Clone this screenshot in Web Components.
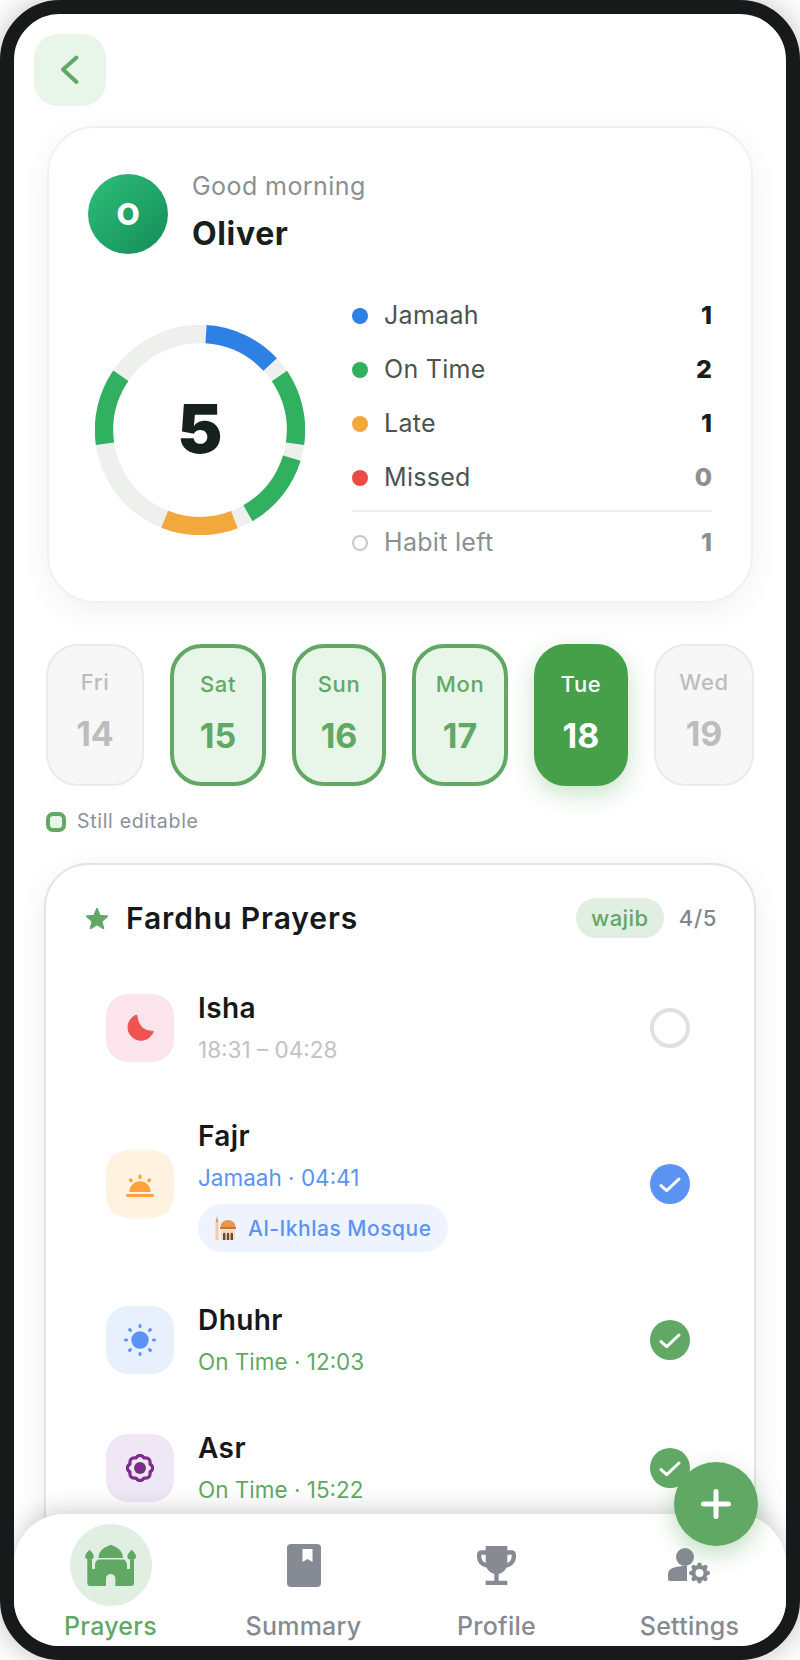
<!DOCTYPE html>
<html lang="en">
<head>
<meta charset="utf-8">
<title>Prayers</title>
<style>
  html, body { margin: 0; background: #fff; }
  body { font-family: Inter, "Liberation Sans", sans-serif; }
</style>
</head>
<body>
<phone-frame>
  <back-button></back-button>
  <summary-card name="Oliver" greeting="Good morning" initial="O" total="5">
    <legend-row color="#2f80e4" label="Jamaah" value="1"></legend-row>
    <legend-row color="#31b05f" label="On Time" value="2"></legend-row>
    <legend-row color="#f2a83b" label="Late" value="1"></legend-row>
    <legend-row color="#ea4b43" label="Missed" value="0" muted></legend-row>
    <legend-row label="Habit left" value="1" muted hollow></legend-row>
  </summary-card>
  <day-strip>
    <day-pill state="off" w="98" day="Fri" date="14"></day-pill>
    <day-pill state="edit" w="96" day="Sat" date="15"></day-pill>
    <day-pill state="edit" w="94" day="Sun" date="16"></day-pill>
    <day-pill state="edit" w="96" day="Mon" date="17"></day-pill>
    <day-pill state="today" w="94" day="Tue" date="18"></day-pill>
    <day-pill state="off" w="100" day="Wed" date="19"></day-pill>
  </day-strip>
  <prayer-card title="Fardhu Prayers" tag="wajib" count="4/5">
    <prayer-row name="Isha" sub="18:31 – 04:28" tone="none" bg="#fce4ec">
      <svg slot="icon" width="28" height="29" viewBox="0 0 28 29" fill="#ef5350"><path d="M10.700 1A13 13 0 1 0 27.300 17.500Q12.400 17.400 10.700 1z" stroke="#ef5350" stroke-width="1" stroke-linejoin="round"/></svg>
    </prayer-row>
    <prayer-row name="Fajr" sub="Jamaah · 04:41" tone="blue" bg="#fff2e0">
      <svg slot="icon" width="28" height="28" viewBox="0 0 28 28" fill="#ffa13d" stroke="#ffa13d"><path stroke="none" d="M3.300 22a10.700 10.700 0 0 1 21.400 0z"/><path stroke="none" d="M0 25.500a1.500 1.500 0 0 1 1.500-1.500h25a1.500 1.500 0 0 1 0 3h-25a1.500 1.500 0 0 1-1.500-1.500z"/><path fill="none" stroke-width="3.200" stroke-linecap="round" d="M14 6v1.500M4.500 10l.8.700M23.500 10l-.8.700"/></svg>
      <place-chip>
        <svg slot="icon" width="22" height="24" viewBox="0 0 22 24"><rect x="1.500" y="6" width="3" height="18" fill="#f4c9a4"/><path d="M3 0l1.500 6h-3z" fill="#e09a68"/><path d="M14 4c4.500 0 7.500 3 7.500 7h-15c0-4 3-7 7.500-7z" fill="#e8954f"/><rect x="6" y="11" width="16" height="2" fill="#c4793f"/><rect x="7" y="13" width="14" height="11" fill="#f6dcc0"/><path d="M9 24v-6a1.200 1.200 0 0 1 2.400 0v6zM12.800 24v-6a1.200 1.200 0 0 1 2.400 0v6zM16.600 24v-6a1.200 1.200 0 0 1 2.400 0v6z" fill="#6b4a35"/></svg>
        Al-Ikhlas Mosque
      </place-chip>
    </prayer-row>
    <prayer-row name="Dhuhr" sub="On Time · 12:03" tone="green" bg="#e8f0fd">
      <svg slot="icon" width="32" height="32" viewBox="-16 -16 32 32"><circle r="8.700" fill="#5b93f5"/><path fill="none" stroke="#5b93f5" stroke-width="3" stroke-linecap="round" d="M0-13.500v-1M0 13.500v1M-13.500 0h-1M13.500 0h1M-9.500-9.500l-.9-.9M9.500-9.500l.9-.9M-9.500 9.500l-.9.9M9.500 9.500l.9.9"/></svg>
    </prayer-row>
    <prayer-row name="Asr" sub="On Time · 15:22" tone="green" bg="#efe7f5">
      <svg slot="icon" width="28" height="28" viewBox="0 0 28 28"><path fill="none" stroke="#7b2d8b" stroke-width="3.200" stroke-linejoin="round" d="M9.870 4.020Q14-1.400 18.130 4.020Q24.900 3.100 23.980 9.870Q29.400 14 23.980 18.130Q24.900 24.900 18.130 23.980Q14 29.400 9.870 23.980Q3.100 24.900 4.020 18.130Q-1.400 14 4.020 9.870Q3.100 3.100 9.870 4.020Z"/><circle cx="14" cy="14" r="6" fill="#7b2d8b"/></svg>
    </prayer-row>
  </prayer-card>
  <bottom-nav slot="nav">
    <nav-item label="Prayers" active>
      <svg width="52" height="43" viewBox="0 0 52 43" fill="#62a865"><path d="M25.700.7C20 3 13.500 6 13.500 14H38C38 6 31.500 3 25.700.7z"/><path d="M4.500 5.500C3 8 .2 9.500.2 12.500.2 14.500 2 16 4.500 16S8.800 14.500 8.800 12.500C8.800 9.500 6 8 4.500 5.500zM46.700 5.500C45.200 8 42.400 9.500 42.400 12.500 42.400 14.500 44.200 16 46.700 16S51 14.500 51 12.500C51 9.500 48.200 8 46.700 5.500z"/><path d="M2.300 16H7V25H10V21C10 18 12 15.500 14 15.500H38C40 15.500 42 18 42 21V25H45V16H49V39A3 3 0 0 1 46 42H30.400V34.600A4.650 4.650 0 0 0 21 34.600V42H5.300A3 3 0 0 1 2.300 39z"/></svg>
    </nav-item>
    <nav-item label="Summary">
      <svg width="34" height="43" viewBox="0 0 34 43"><rect width="34" height="43" rx="4" fill="#868a93"/><path d="M15.500 5h10v13l-5-3-5 3z" fill="#fff"/></svg>
    </nav-item>
    <nav-item label="Profile">
      <svg width="39" height="39" viewBox="3 3 18 18" fill="#868a93"><path d="M19 5h-2V3H7v2H5c-1.100 0-2 .9-2 2v1c0 2.550 1.920 4.630 4.390 4.940.63 1.500 1.980 2.630 3.610 2.960V19H7v2h10v-2h-4v-3.100c1.630-.33 2.980-1.460 3.610-2.960C19.080 12.630 21 10.550 21 8V7c0-1.100-.9-2-2-2zM5 8V7h2v3.820C5.840 10.400 5 9.300 5 8zm14 0c0 1.300-.84 2.400-2 2.820V7h2v1z"/></svg>
    </nav-item>
    <nav-item label="Settings">
      <svg width="44" height="38" viewBox="0 0 44 38" style="margin-top:4px"><circle cx="17" cy="9" r="9" fill="#868a93"/><path d="M0 31V26C0 20 8 18 19 18V33H2A2 2 0 0 1 0 31z" fill="#868a93"/><path d="M31.500 16.800v16.400M23.300 25h16.400M25.700 19.200l11.600 11.600M37.300 19.200L25.700 30.800" stroke="#868a93" stroke-width="4.500" stroke-linecap="round"/><circle cx="31.500" cy="25" r="8" fill="#868a93"/><circle cx="31.500" cy="25" r="4" fill="#fff"/></svg>
    </nav-item>
  </bottom-nav>
  <add-button slot="fab"></add-button>
</phone-frame>

<script>
class PhoneFrame extends HTMLElement {
    constructor() {
        super();
        this.attachShadow({mode: "open"}).innerHTML = `
        <style>
            :host {
                display: flex;
                flex-direction: column;
                position: relative;
                box-sizing: border-box;
                width: 800px;
                height: 1660px;
                border: 14px solid #17191b;
                border-radius: 60px;
                background: #fff;
                overflow: hidden;
                box-shadow: 0 0 30px rgba(0, 0, 0, 0.25);
            }
            .content {
                flex: 1;
                min-height: 0;
                overflow: hidden;
                padding: 20px 0 0 0;
            }
            .fab {
                position: absolute;
                right: 28px;
                bottom: 100px;
                z-index: 2;
            }
        </style>
        <div class="content"><slot></slot></div>
        <slot name="nav"></slot>
        <div class="fab"><slot name="fab"></slot></div>
        `;
    }
}

class BackButton extends HTMLElement {
    constructor() {
        super();
        this.attachShadow({mode: "open"}).innerHTML = `
        <style>
            :host {
                display: flex;
                align-items: center;
                justify-content: center;
                width: 72px;
                height: 72px;
                margin-left: 20px;
                border-radius: 24px;
                background: #e8f5e9;
            }
        </style>
        <svg width="72" height="72" viewBox="0 0 72 72" fill="none" stroke="#62a865" stroke-width="4" stroke-linecap="round" stroke-linejoin="round"><path d="M42.500 23.500 L29 35.500 L42.500 48"/></svg>
        `;
    }
}

class SummaryCard extends HTMLElement {
    constructor() {
        super();
        this.attachShadow({mode: "open"});
    }

    connectedCallback() {
        const seg = (from, to, color) => {
            const c = 2 * Math.PI * 96;
            const len = (to - from) / 360 * c;
            return `<circle cx="105" cy="105" r="96" fill="none" stroke="${color}" stroke-width="18.400" stroke-dasharray="${len} ${c - len}" transform="rotate(${from - 90} 105 105)"/>`;
        };
        this.shadowRoot.innerHTML = `
        <style>
            :host {
                display: block;
                box-sizing: border-box;
                height: 477px;
                margin: 20px 33px 0 33px;
                padding: 46px 39px 0 39px;
                border: 2px solid #f0f0f0;
                border-radius: 48px;
                background: #fff;
                box-shadow: 0 8px 32px rgba(0, 0, 0, 0.06);
            }
            .head { display: flex; align-items: center; gap: 24px; }
            .avatar {
                display: flex;
                align-items: center;
                justify-content: center;
                width: 80px;
                height: 80px;
                border-radius: 50%;
                background: linear-gradient(135deg, #2fbf7a, #128c58);
                color: #fff;
                font-size: 30px;
                font-weight: 800;
            }
            .greet { font-size: 25px; line-height: 36px; color: #8a918e; letter-spacing: 0.017em; margin-top: -7px; }
            .name { font-size: 32px; line-height: 44px; font-weight: 700; color: #17211c; letter-spacing: 0.02em; margin: 8px 0 -2px; }
            .body { display: flex; align-items: center; gap: 47px; margin: 35px 0 0 7px; }
            .donut { position: relative; width: 210px; height: 210px; flex: none; }
            .donut svg { display: block; }
            .total {
                position: absolute;
                inset: 0;
                display: flex;
                align-items: center;
                justify-content: center;
                padding-bottom: 3px;
                font-size: 68px;
                font-weight: 900;
                color: #17211c;
            }
            .legend { flex: 1; }
            ::slotted(legend-row:nth-child(5)) {
                margin-top: 5px;
                padding-top: 4px;
                height: 60px;
                border-top: 2px solid #eeeeee;
            }
        </style>
        <div class="head">
            <div class="avatar">${this.getAttribute("initial")}</div>
            <div>
                <div class="greet">${this.getAttribute("greeting")}</div>
                <div class="name">${this.getAttribute("name")}</div>
            </div>
        </div>
        <div class="body">
            <div class="donut">
                <svg width="210" height="210" viewBox="0 0 210 210">
                    <circle cx="105" cy="105" r="96" fill="none" stroke="#eef0ee" stroke-width="18.400"/>
                    ${seg(3.6, 46.9, "#2f80e4")}
                    ${seg(55.8, 98.2, "#31b05f")}
                    ${seg(107, 150, "#31b05f")}
                    ${seg(159, 201.5, "#f2a83b")}
                    ${seg(261.8, 304.4, "#31b05f")}
                </svg>
                <div class="total">${this.getAttribute("total")}</div>
            </div>
            <div class="legend"><slot></slot></div>
        </div>
        `;
    }
}

class LegendRow extends HTMLElement {
    constructor() {
        super();
        this.attachShadow({mode: "open"});
    }

    connectedCallback() {
        const muted = this.hasAttribute("muted");
        const hollow = this.hasAttribute("hollow");
        const dot = hollow ? "background: #fff; border: 2px solid #c4c8c6;" : `background: ${this.getAttribute("color")};`;
        this.shadowRoot.innerHTML = `
        <style>
            :host {
                display: flex;
                align-items: center;
                box-sizing: border-box;
                height: 54px;
                font-size: 25px;
            }
            .dot { box-sizing: border-box; width: 16px; height: 16px; border-radius: 50%; margin-right: 16px; ${dot} }
            .label { flex: 1; padding-bottom: 2px; letter-spacing: 0.012em; color: ${hollow ? "#8a918e" : "#4a5550"}; }
            .value { font-weight: 800; padding-bottom: 2px; color: ${muted ? "#8a918e" : "#17211c"}; }
        </style>
        <span class="dot"></span>
        <span class="label">${this.getAttribute("label")}</span>
        <span class="value">${this.getAttribute("value")}</span>
        `;
    }
}

class DayStrip extends HTMLElement {
    constructor() {
        super();
        this.attachShadow({mode: "open"}).innerHTML = `
        <style>
            :host { display: block; margin: 41px 32px 0 32px; }
            .days { display: flex; gap: 26px; }
            .note { display: flex; align-items: center; gap: 11px; height: 20px; margin-top: 26px; font-size: 19.5px; line-height: 20px; color: #8a8f9a; letter-spacing: 0.035em; }
            .note span:last-child { padding-bottom: 2px; }
            .mark { box-sizing: border-box; width: 20px; height: 20px; border: 4px solid #62a865; border-radius: 7px; background: #e8f5e9; }
        </style>
        <div class="days"><slot></slot></div>
        <div class="note"><span class="mark"></span><span>Still editable</span></div>
        `;
    }
}

class DayPill extends HTMLElement {
    constructor() {
        super();
        this.attachShadow({mode: "open"});
    }

    connectedCallback() {
        const looks = {
            off: "background: #f7f7f7; border: 2px solid #eaeaea; color: #bdbdbd;",
            edit: "background: #e8f5e9; border: 4px solid #62a865; color: #62a865;",
            today: "background: #45a049; border: 4px solid #45a049; color: #fff; box-shadow: 0 8px 24px rgba(69, 160, 73, 0.3);"
        };
        this.shadowRoot.innerHTML = `
        <style>
            :host {
                display: flex;
                flex-direction: column;
                align-items: center;
                box-sizing: border-box;
                flex: none;
                width: ${this.getAttribute("w")}px;
                height: 142px;
                padding-top: 20px;
                border-radius: 32px;
                ${looks[this.getAttribute("state")]}
            }
            .day { font-size: 22px; line-height: 32px; font-weight: 500; letter-spacing: 0.03em; }
            .date { font-size: 34px; line-height: 44px; font-weight: 700; margin-top: 14px; }
        </style>
        <span class="day">${this.getAttribute("day")}</span>
        <span class="date">${this.getAttribute("date")}</span>
        `;
    }
}

class PrayerCard extends HTMLElement {
    constructor() {
        super();
        this.attachShadow({mode: "open"});
    }

    connectedCallback() {
        this.shadowRoot.innerHTML = `
        <style>
            :host {
                display: block;
                box-sizing: border-box;
                margin: 31px 30px 0 30px;
                padding: 33px 37px 48px 40px;
                border: 2px solid #e3e3e3;
                border-radius: 44px;
                background: #fff;
                box-shadow: 0 8px 32px rgba(0, 0, 0, 0.07);
            }
            .head { display: flex; align-items: center; height: 40px; margin-bottom: 50px; }
            .star { display: block; margin-right: 18px; }
            .title { flex: 1; font-size: 30px; font-weight: 600; color: #15191c; letter-spacing: 0.03em; }
            .tag {
                display: flex;
                align-items: center;
                justify-content: center;
                width: 88px;
                height: 40px;
                border-radius: 20px;
                background: #e1efe2;
                color: #62a865;
                font-size: 22px;
                font-weight: 500;
                letter-spacing: 0.02em;
            }
            .count { margin-left: 15px; font-size: 22px; font-weight: 500; color: #80858f; letter-spacing: 0.03em; }
            .rows { display: flex; flex-direction: column; gap: 48px; padding: 0 27px 0 20px; }
        </style>
        <div class="head">
            <svg class="star" width="22" height="21" viewBox="2 2 20 19" fill="#62a865" stroke="#62a865" stroke-width="1" stroke-linejoin="round"><path d="M12 17.270L18.180 21l-1.640-7.030L22 9.240l-7.190-.61L12 2 9.190 8.630 2 9.240l5.460 4.730L5.820 21z"/></svg>
            <span class="title">${this.getAttribute("title")}</span>
            <span class="tag">${this.getAttribute("tag")}</span>
            <span class="count">${this.getAttribute("count")}</span>
        </div>
        <div class="rows"><slot></slot></div>
        `;
    }
}

class PrayerRow extends HTMLElement {
    constructor() {
        super();
        this.attachShadow({mode: "open"});
    }

    connectedCallback() {
        const tones = {none: "#c2c2c2", blue: "#5b93f5", green: "#62a865"};
        const tone = this.getAttribute("tone");
        const mark = tone === "none"
            ? `<span class="check empty"></span>`
            : `<span class="check" style="background:${tones[tone]}"><svg width="40" height="40" viewBox="0 0 40 40" fill="none" stroke="#fff" stroke-width="3" stroke-linecap="round" stroke-linejoin="round"><path d="M11 21.700 L16.700 26.700 L29 15"/></svg></span>`;
        this.shadowRoot.innerHTML = `
        <style>
            :host { display: flex; align-items: center; }
            .icon {
                display: flex;
                align-items: center;
                justify-content: center;
                flex: none;
                width: 68px;
                height: 68px;
                border-radius: 22px;
                background: ${this.getAttribute("bg")};
            }
            .text { flex: 1; margin-left: 24px; }
            .name { font-size: 28px; line-height: 40px; font-weight: 600; color: #15191c; letter-spacing: 0.015em; }
            .sub { font-size: 22.5px; line-height: 40px; margin: 2px 0 -2px; color: ${tones[tone]}; }
            .check { box-sizing: border-box; flex: none; display: block; width: 40px; height: 40px; border-radius: 50%; }
            .check svg { display: block; }
            .empty { border: 4px solid #e0e0e0; }
        </style>
        <div class="icon"><slot name="icon"></slot></div>
        <div class="text">
            <div class="name">${this.getAttribute("name")}</div>
            <div class="sub">${this.getAttribute("sub")}</div>
            <slot></slot>
        </div>
        ${mark}
        `;
    }
}

class PlaceChip extends HTMLElement {
    constructor() {
        super();
        this.attachShadow({mode: "open"}).innerHTML = `
        <style>
            :host {
                display: inline-flex;
                align-items: center;
                box-sizing: border-box;
                height: 48px;
                margin-top: 8px;
                padding: 0 16px 0 16px;
                border-radius: 24px;
                background: #eef3fe;
                color: #5b93f5;
                font-size: 21px;
                font-weight: 500;
                letter-spacing: 0.025em;
                gap: 12px;
            }
        </style>
        <slot name="icon"></slot><slot></slot>
        `;
    }
}

class BottomNav extends HTMLElement {
    constructor() {
        super();
        this.attachShadow({mode: "open"}).innerHTML = `
        <style>
            :host {
                display: grid;
                grid-template-columns: repeat(4, 193px);
                flex: none;
                position: relative;
                z-index: 1;
                box-sizing: border-box;
                height: 132px;
                margin-top: -48px;
                padding-top: 10px;
                border-radius: 50px 50px 0 0;
                background: #fff;
                box-shadow: 0 -4px 24px rgba(0, 0, 0, 0.18);
            }
        </style>
        <slot></slot>
        `;
    }
}

class NavItem extends HTMLElement {
    constructor() {
        super();
        this.attachShadow({mode: "open"});
    }

    connectedCallback() {
        const active = this.hasAttribute("active");
        this.shadowRoot.innerHTML = `
        <style>
            :host { display: flex; flex-direction: column; align-items: center; }
            .icon {
                display: flex;
                align-items: center;
                justify-content: center;
                width: 82px;
                height: 82px;
                border-radius: 50%;
                background: ${active ? "#e0efe2" : "transparent"};
            }
            .label {
                margin-top: 3px;
                font-size: 25px;
                line-height: 34px;
                font-weight: 500;
                letter-spacing: 0.01em;
                white-space: nowrap;
                color: ${active ? "#62a865" : "#868a93"};
            }
        </style>
        <div class="icon"><slot></slot></div>
        <div class="label">${this.getAttribute("label")}</div>
        `;
    }
}

class AddButton extends HTMLElement {
    constructor() {
        super();
        this.attachShadow({mode: "open"}).innerHTML = `
        <style>
            :host {
                display: flex;
                align-items: center;
                justify-content: center;
                width: 84px;
                height: 84px;
                border-radius: 50%;
                background: #62a865;
                box-shadow: 0 8px 24px rgba(98, 168, 101, 0.4);
            }
        </style>
        <svg width="30" height="30" viewBox="0 0 30 30" fill="none" stroke="#fff" stroke-width="5" stroke-linecap="round"><path d="M15 2.500v25M2.500 15h25"/></svg>
        `;
    }
}

customElements.define("phone-frame", PhoneFrame);
customElements.define("back-button", BackButton);
customElements.define("summary-card", SummaryCard);
customElements.define("legend-row", LegendRow);
customElements.define("day-strip", DayStrip);
customElements.define("day-pill", DayPill);
customElements.define("prayer-card", PrayerCard);
customElements.define("prayer-row", PrayerRow);
customElements.define("place-chip", PlaceChip);
customElements.define("bottom-nav", BottomNav);
customElements.define("nav-item", NavItem);
customElements.define("add-button", AddButton);
</script>
</body>
</html>
